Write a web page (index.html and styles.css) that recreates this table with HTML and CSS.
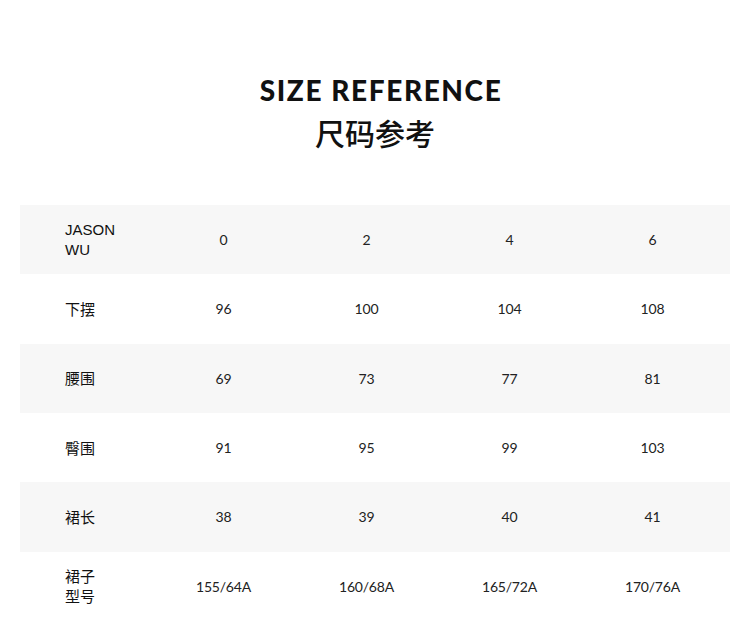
FILE: index.html
```html
<!DOCTYPE html>
<html lang="zh">
<head>
<meta charset="utf-8">
<link rel="stylesheet" href="styles.css">
</head>
<body>
<header class="head">
  <h1 class="title-en">SIZE REFERENCE</h1>
  <h2 class="title-zh">尺码参考</h2>
</header>
<div class="table">
  <div class="row shade">
    <div class="label en">JASON<br>WU</div>
    <div class="cell">0</div><div class="cell">2</div><div class="cell">4</div><div class="cell">6</div>
  </div>
  <div class="row">
    <div class="label">下摆</div>
    <div class="cell">96</div><div class="cell">100</div><div class="cell">104</div><div class="cell">108</div>
  </div>
  <div class="row shade">
    <div class="label">腰围</div>
    <div class="cell">69</div><div class="cell">73</div><div class="cell">77</div><div class="cell">81</div>
  </div>
  <div class="row">
    <div class="label">臀围</div>
    <div class="cell">91</div><div class="cell">95</div><div class="cell">99</div><div class="cell">103</div>
  </div>
  <div class="row shade">
    <div class="label">裙长</div>
    <div class="cell">38</div><div class="cell">39</div><div class="cell">40</div><div class="cell">41</div>
  </div>
  <div class="row">
    <div class="label">裙子<br>型号</div>
    <div class="cell">155/64A</div><div class="cell">160/68A</div><div class="cell">165/72A</div><div class="cell">170/76A</div>
  </div>
</div>
</body>
</html>
```
FILE: styles.css
```css
html, body {
  margin: 0;
  padding: 0;
  background: #ffffff;
  color: #111111;
}
body {
  width: 750px;
  font-family: "Lato", "Noto Sans CJK SC", sans-serif;
}
.head {
  padding-top: 70px;
  text-align: center;
}
.title-en {
  margin: 0;
  font-family: "Lato", sans-serif;
  font-weight: 900;
  font-size: 28px;
  line-height: 40px;
  letter-spacing: 1.6px;
  padding-left: 12px;
}
.title-zh {
  margin: 0;
  margin-top: 2px;
  font-family: "Noto Sans CJK SC", sans-serif;
  font-weight: 500;
  font-size: 30px;
  line-height: 40px;
}
.table {
  margin: 53px 20px 0 20px;
  width: 710px;
}
.row {
  display: grid;
  grid-template-columns: 132px repeat(4, 143px) 1fr;
  height: 69.33px;
  align-items: center;
}
.shade {
  background: #f7f7f7;
}
.label {
  padding-left: 45px;
  font-family: "Noto Sans CJK SC", sans-serif;
  font-size: 15px;
  line-height: 20px;
  color: #111;
}
.label.en {
  font-family: "Liberation Sans", Arial, sans-serif;
  font-size: 15px;
  line-height: 20px;
}
.cell {
  text-align: center;
  font-family: "Lato", sans-serif;
  font-size: 14px;
  font-weight: 400;
  letter-spacing: -0.2px;
  color: #222;
}
```
